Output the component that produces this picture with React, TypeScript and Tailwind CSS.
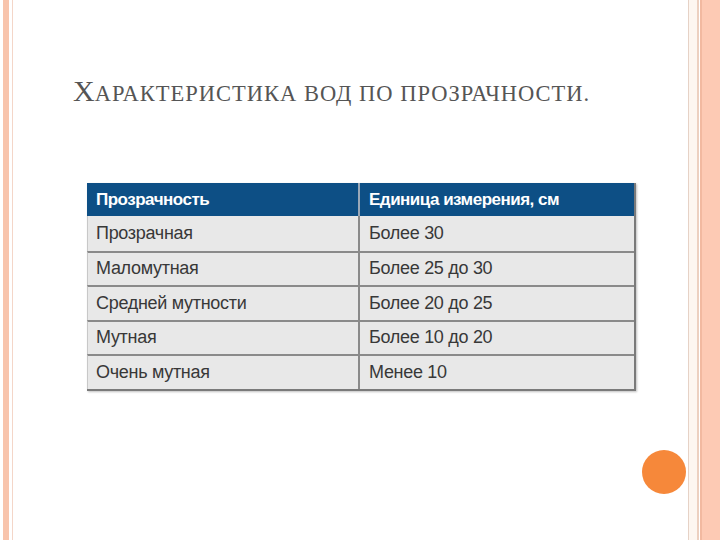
export default function App() {
  const rows = [
    ["Прозрачная", "Более 30"],
    ["Маломутная", "Более 25 до 30"],
    ["Средней мутности", "Более 20 до 25"],
    ["Мутная", "Более 10 до 20"],
    ["Очень мутная", "Менее 10"],
  ];

  return (
    <div className="flex h-[540px] w-[720px] overflow-hidden bg-white">
      {/* left frame */}
      <div className="w-[3px] bg-white" />
      <div className="w-[6px] bg-[#f8c4ac]" />
      <div className="w-[3px] bg-white" />
      <div className="w-px bg-[#f4d6c8]" />

      <div className="relative flex flex-1 flex-col">
        <h1
          className="ml-[60px] mt-[75px] text-[30px] leading-[32px] text-[#555555]"
          style={{ fontFamily: '"Liberation Serif", "DejaVu Serif", serif' }}
        >
          Х<span className="text-[22.5px] uppercase tracking-[1px]">арактеристика вод по прозрачности.</span>
        </h1>

        <div
          className="ml-[74px] mt-[73px] w-[549px] border-b-2 border-r-2 border-[#7a7a7a] shadow-[1px_1px_2px_rgba(0,0,0,0.25)]"
          style={{ fontFamily: '"Liberation Sans Narrow", "Liberation Sans", Arial, sans-serif' }}
        >
          <div className="flex h-[33px] bg-[#0d4f85] text-[17px] font-bold text-white">
            <div className="flex w-[273px] items-center border-r-2 border-[#9aa8b8] pl-[9px] tracking-[-0.5px]">
              Прозрачность
            </div>
            <div className="flex flex-1 items-center pl-[9px] tracking-[-0.5px]">Единица измерения, см</div>
          </div>
          {rows.map(([a, b], i) => (
            <div
              key={a}
              className={`flex h-[34.5px] bg-[#e8e8e8] text-[18px] text-[#383838] ${
                i > 0 ? "border-t-2 border-[#8a8a8a]" : ""
              } border-l border-l-[#c8c8c8]`}
            >
              <div className="flex w-[272px] items-center border-r-2 border-[#8a8a8a] pl-[8px] tracking-[-0.3px]">{a}</div>
              <div className="flex flex-1 items-center pl-[9px] tracking-[-0.3px]">{b}</div>
            </div>
          ))}
        </div>

        <div className="absolute left-[629px] top-[450px] h-[44px] w-[44px] rounded-full bg-[#f6883a]" />
      </div>

      {/* right frame */}
      <div className="w-px bg-[#e6d2c6]" />
      <div className="w-[8px] bg-[#fdf6f0]" />
      <div className="w-[2px] bg-[#ecd0c0]" />
      <div className="w-px bg-white" />
      <div className="w-[2px] bg-[#f2b9a0]" />
      <div className="w-[18px] bg-[#fdcab4]" />
    </div>
  );
}
